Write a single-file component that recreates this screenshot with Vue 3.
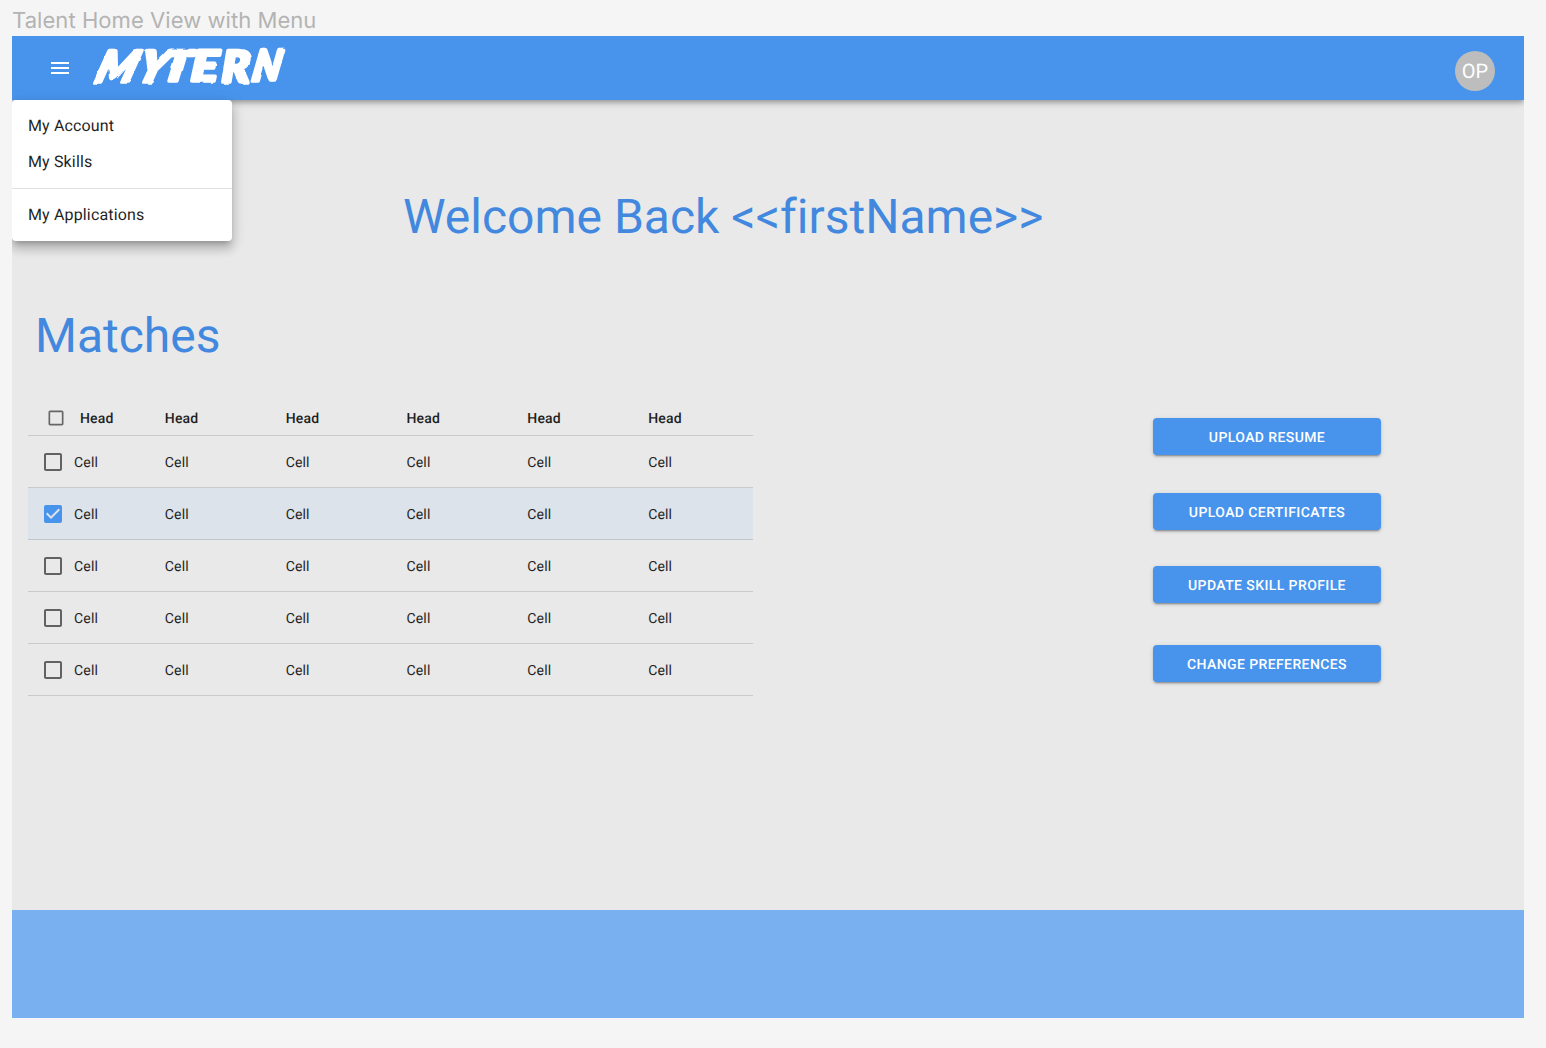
<script setup>
const columns = 6
const rows = [false, true, false, false, false]
const actions = [
  { label: 'UPLOAD RESUME' },
  { label: 'UPLOAD CERTIFICATES' },
  { label: 'UPDATE SKILL PROFILE' },
  { label: 'CHANGE PREFERENCES' },
]
</script>

<template>
  <div class="canvas">
    <div class="frame-title">Talent Home View with Menu</div>
    <div class="frame">
      <header class="bar">
        <svg class="burger" width="24" height="24" viewBox="0 0 24 24" fill="#fff">
          <path d="M3 18h18v-2H3v2zm0-5h18v-2H3v2zm0-7v2h18V6H3z" />
        </svg>
        <svg class="logo" width="206" height="64" viewBox="86 36 206 64">
          <defs>
            <filter id="rough" x="-5%" y="-20%" width="110%" height="140%">
              <feTurbulence type="fractalNoise" baseFrequency="0.09" numOctaves="1" seed="9" result="n" />
              <feDisplacementMap in="SourceGraphic" in2="n" scale="3" xChannelSelector="R" yChannelSelector="G" />
            </filter>
          </defs>
          <g class="mark" filter="url(#rough)">
            <text transform="translate(93.5 82) skewX(-18) scale(1 .98)">M</text>
            <text transform="translate(135 82) skewX(-18) scale(1.04 .98)">Y</text>
            <text transform="translate(161 81) skewX(-9) scale(1.12 .95)">T</text>
            <text transform="translate(190.5 81) skewX(-4) scale(1.14 .96)">E</text>
            <text transform="translate(221.5 82) skewX(-2) scale(1.04 .98)">R</text>
            <text transform="translate(251 81) skewX(-10) scale(.88 .98)">N</text>
          </g>
        </svg>
        <div class="avatar">OP</div>
      </header>

      <nav class="menu">
        <div class="item">My Account</div>
        <div class="item">My Skills</div>
        <div class="divider"></div>
        <div class="item">My Applications</div>
      </nav>

      <main class="content">
        <h1 class="welcome">Welcome Back &lt;&lt;firstName&gt;&gt;</h1>
        <h2 class="matches">Matches</h2>
        <div class="columns">
          <div class="table">
            <div class="row head">
              <div class="first">
                <svg width="20" height="20" viewBox="0 0 24 24" fill="#666">
                  <path d="M19 5v14H5V5h14m0-2H5c-1.1 0-2 .9-2 2v14c0 1.1.9 2 2 2h14c1.1 0 2-.9 2-2V5c0-1.1-.9-2-2-2z" />
                </svg>
                <span>Head</span>
              </div>
              <div v-for="c in columns - 1" :key="c" class="cell">Head</div>
            </div>
            <div v-for="(checked, i) in rows" :key="i" class="row" :class="{ selected: checked }">
              <div class="first">
                <svg v-if="checked" width="24" height="24" viewBox="0 0 24 24" fill="#4894ed">
                  <path d="M19 3H5c-1.11 0-2 .9-2 2v14c0 1.1.89 2 2 2h14c1.11 0 2-.9 2-2V5c0-1.1-.89-2-2-2zm-9 14l-5-5 1.41-1.41L10 14.17l7.59-7.59L19 8l-9 9z" />
                </svg>
                <svg v-else width="24" height="24" viewBox="0 0 24 24" fill="#626262">
                  <path d="M19 5v14H5V5h14m0-2H5c-1.1 0-2 .9-2 2v14c0 1.1.9 2 2 2h14c1.1 0 2-.9 2-2V5c0-1.1-.9-2-2-2z" />
                </svg>
                <span>Cell</span>
              </div>
              <div v-for="c in columns - 1" :key="c" class="cell">Cell</div>
            </div>
          </div>
          <div class="actions">
            <button v-for="a in actions" :key="a.label" class="btn">{{ a.label }}</button>
          </div>
        </div>
      </main>
      <footer class="foot"></footer>
    </div>
  </div>
</template>

<style>
body {
  background: #f5f5f5;
}
</style>

<style scoped>
.canvas {
  box-sizing: border-box;
  height: 1048px;
  padding-left: 12px;
  overflow: hidden;
  font-family: Roboto, sans-serif;
  color: #1f1f1f;
  text-rendering: geometricPrecision;
}
.frame-title {
  height: 36px;
  line-height: 42px;
  font-family: Inter, sans-serif;
  font-size: 22px;
  letter-spacing: 0.06px;
  color: #b3b3b3;
  white-space: nowrap;
}
.frame {
  position: relative;
  display: flex;
  flex-direction: column;
  width: 1512px;
  height: 982px;
  background: #e9e9e9;
  overflow: hidden;
}
.bar {
  position: relative;
  display: flex;
  flex: none;
  height: 64px;
  background: #4894ed;
  box-shadow: 0 2px 4px -1px rgba(0, 0, 0, 0.2), 0 4px 5px rgba(0, 0, 0, 0.14), 0 1px 10px rgba(0, 0, 0, 0.12);
}
.burger {
  margin: 20px 0 0 36px;
}
.logo {
  margin-left: 14px;
  overflow: visible;
}
.mark {
  fill: #fff;
  stroke: #fff;
  stroke-width: 3.8;
  stroke-linejoin: round;
  font: italic 900 44px Lato, sans-serif;
}
.avatar {
  width: 40px;
  height: 40px;
  margin: 15px 29px 0 auto;
  border-radius: 50%;
  background: #bdbdbd;
  color: #fff;
  font-size: 20px;
  line-height: 41px;
  letter-spacing: 0.14px;
  text-align: center;
}
.menu {
  position: absolute;
  top: 64px;
  left: 0;
  box-sizing: border-box;
  width: 220px;
  height: 141px;
  padding: 8px 0;
  border-radius: 4px;
  background: #fff;
  box-shadow: 0 5px 5px -3px rgba(0, 0, 0, 0.2), 0 8px 10px 1px rgba(0, 0, 0, 0.14), 0 3px 14px 2px rgba(0, 0, 0, 0.12);
}
.item {
  height: 36px;
  padding-left: 16px;
  font-size: 16px;
  line-height: 36px;
  letter-spacing: 0.15px;
}
.divider {
  height: 1px;
  margin: 8px 0;
  background: #e0e0e0;
}
.content {
  flex: 1;
}
.foot {
  flex: none;
  height: 108px;
  background: #78b0f0;
}
.welcome,
.matches {
  margin: 0;
  font-size: 48px;
  font-weight: 400;
  line-height: 56px;
  font-variant-ligatures: none;
  color: #4288de;
  white-space: nowrap;
}
.welcome {
  padding: 89px 0 0 391px;
}
.matches {
  padding: 63px 0 0 23px;
}
.columns {
  display: flex;
  margin-top: 36px;
  padding-left: 16px;
}
.table {
  width: 725px;
}
.row {
  display: flex;
  box-sizing: border-box;
  height: 52px;
  border-bottom: 1px solid #cacaca;
  font-size: 14px;
  line-height: 55px;
  letter-spacing: 0.17px;
}
.row.head {
  height: 36px;
  font-weight: 500;
  line-height: 39px;
}
.row.selected {
  background: #dce3eb;
  border-color: #bfc6ce;
}
.first {
  display: flex;
  align-items: center;
  box-sizing: border-box;
  width: 120.85px;
  height: 51px;
  padding-left: 13px;
}
.first span {
  position: relative;
  top: 2px;
  margin-left: 9px;
  line-height: 51px;
}
.head .first {
  height: 35px;
  padding-left: 18px;
}
.head .first span {
  margin-left: 14px;
  line-height: 35px;
}
.cell {
  box-sizing: border-box;
  width: 120.85px;
  padding-left: 16px;
}
.actions {
  display: flex;
  flex-direction: column;
  margin: 18px 0 0 400px;
}
.btn {
  width: 228px;
  height: 37px;
  padding: 3px 0 0;
  border: 0;
  border-radius: 4px;
  background: #4894ed;
  box-shadow: 0 3px 1px -2px rgba(0, 0, 0, 0.2), 0 2px 2px rgba(0, 0, 0, 0.14), 0 1px 5px rgba(0, 0, 0, 0.12);
  color: #fff;
  font: 500 14px/34px Roboto, sans-serif;
  letter-spacing: 0.4px;
  text-rendering: inherit;
}
.btn:nth-child(2) {
  margin-top: 38px;
}
.btn:nth-child(3) {
  margin-top: 36px;
}
.btn:nth-child(4) {
  margin-top: 42px;
}
</style>
